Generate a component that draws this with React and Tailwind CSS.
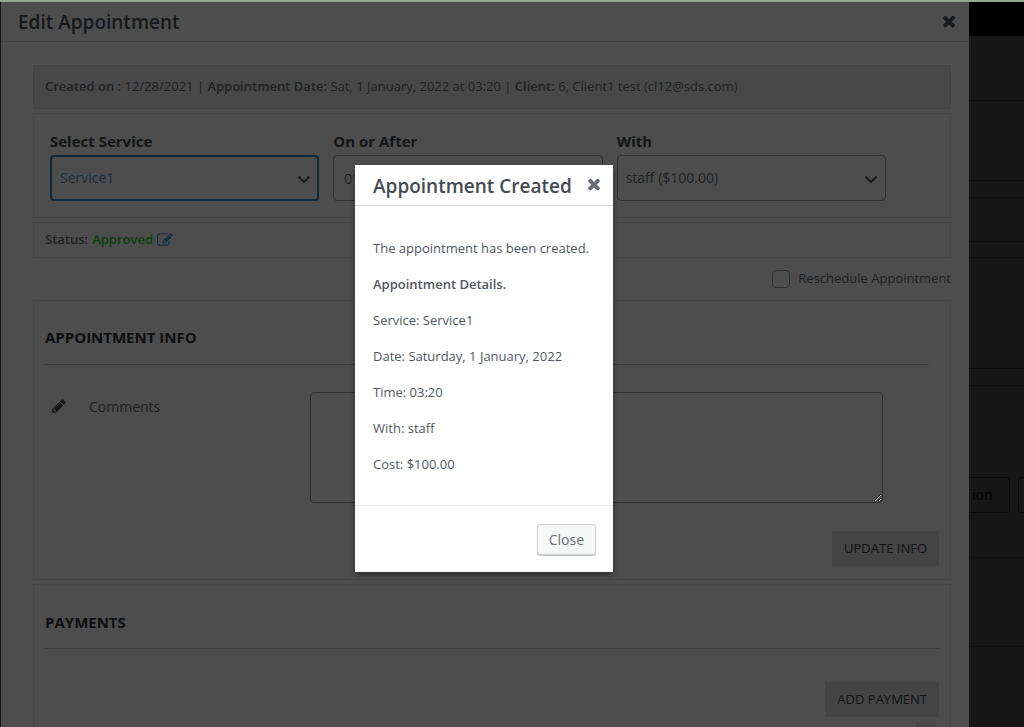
import React, { useState } from 'react';

function TimesIcon({ className }) {
    return (
        <svg viewBox="0 0 1792 1792" fill="currentColor" className={className} aria-hidden="true">
            <path d="M1490 1322q0 40-28 68l-136 136q-28 28-68 28t-68-28l-294-294-294 294q-28 28-68 28t-68-28l-136-136q-28-28-28-68t28-68l294-294-294-294q-28-28-28-68t28-68l136-136q28-28 68-28t68 28l294 294 294-294q28-28 68-28t68 28l136 136q28 28 28 68t-28 68l-294 294 294 294q28 28 28 68z" />
        </svg>
    );
}

function PencilIcon({ className }) {
    return (
        <svg viewBox="0 0 1792 1792" fill="currentColor" className={className} aria-hidden="true">
            <path d="M491 1536l91-91-235-235-91 91v107h128v128h107zm523-928q0-22-22-22-10 0-17 7l-542 542q-7 7-7 17 0 22 22 22 10 0 17-7l542-542q7-7 7-17zm-54-192l416 416-832 832h-416v-416zm683 96q0 53-37 90l-166 166-416-416 166-165q36-38 90-38 53 0 91 38l235 234q37 39 37 91z" />
        </svg>
    );
}

function EditIcon({ className }) {
    return (
        <svg viewBox="0 0 1792 1792" fill="currentColor" className={className} aria-hidden="true">
            <path d="M888 1184l116-116-152-152-116 116v56h96v96h56zm440-720q-16-16-33 1l-350 350q-17 17-1 33t33-1l350-350q17-17 1-33zm80 594v190q0 119-84.5 203.5t-203.5 84.5h-832q-119 0-203.5-84.5t-84.5-203.5v-832q0-119 84.5-203.5t203.5-84.5h832q63 0 117 25 15 7 18 23 3 17-9 29l-49 49q-14 14-32 8-23-6-45-6h-832q-66 0-113 47t-47 113v832q0 66 47 113t113 47h832q66 0 113-47t47-113v-126q0-13 9-22l64-64q15-15 35-7t20 29zm-96-738l288 288-672 672h-288v-288zm444 132l-92 92-288-288 92-92q28-28 68-28t68 28l152 152q28 28 28 68t-28 68z" />
        </svg>
    );
}

function SelectField({ id, label, value, active }) {
    return (
        <div>
            <label htmlFor={id} className="block text-[15px] leading-5 mb-1 font-bold text-[#141516]">{label}</label>
            <div className="relative">
                <select
                    id={id}
                    defaultValue={value}
                    className={
                        active
                            ? 'w-full h-[46px] px-2 text-sm appearance-none rounded border-2 border-[#0b2a40] text-[#16303f] outline-none'
                            : 'w-full h-[46px] px-2 text-sm appearance-none rounded border border-[#2f3031] text-[#202224] outline-none'
                    }
                >
                    <option value={value}>{value}</option>
                </select>
                <svg viewBox="0 0 14 10" className="absolute right-2 top-5 w-3.5 h-2.5 text-[#191b1c] pointer-events-none" fill="none" stroke="currentColor" strokeWidth="2">
                    <path d="M1.5 1.5 L7 7 L12.5 1.5" />
                </svg>
            </div>
        </div>
    );
}

function Dialog({ onClose }) {
    const details = [
        'Service: Service1',
        'Date: Saturday, 1 January, 2022',
        'Time: 03:20',
        'With: staff',
        'Cost: $100.00',
    ];

    return (
        <div className="absolute inset-0 flex items-center justify-center pt-2 pr-0.5">
            <div role="dialog" aria-labelledby="dialog-title" className="w-[258px] bg-white text-[#50575e] shadow-[0_3px_6px_rgba(0,0,0,0.4)]">
                <div className="flex items-center justify-between h-[41px] pl-[18px] pr-2.5 border-b border-[#dddddd]">
                    <h2 id="dialog-title" className="pt-0.5 text-[19px] font-semibold text-[#444b52] whitespace-nowrap">Appointment Created</h2>
                    <button type="button" aria-label="Close dialog" onClick={onClose} className="mb-0.5 text-[#666c72]">
                        <TimesIcon className="w-[18px] h-[18px]" />
                    </button>
                </div>
                <div className="px-[18px] pt-8 pb-[31px] space-y-4 leading-5 whitespace-nowrap">
                    <p>The appointment has been created.</p>
                    <p className="font-semibold">Appointment Details.</p>
                    {details.map((line) => (
                        <p key={line}>{line}</p>
                    ))}
                </div>
                <div className="flex justify-end px-[17px] pt-[18px] pb-[17px] border-t border-[#e5e5e5]">
                    <button type="button" onClick={onClose} className="h-[31px] px-[11px] rounded-[3px] border border-[#cccccc] bg-[#f6f7f7] text-sm text-[#6b7075] shadow-[0_1px_0_#c4c8cb]">
                        Close
                    </button>
                </div>
            </div>
        </div>
    );
}

function App() {
    const [open, setOpen] = useState(true);
    const [comments, setComments] = useState('');
    const [date, setDate] = useState('01/01/2022');

    return (
        <div className="h-screen overflow-hidden flex flex-col bg-[#171717] border-t-2 border-[#91ab93] font-['Open_Sans','Noto_Sans',sans-serif] text-[13px]">
            <div className="flex flex-1 min-h-0">
                <main className="relative flex-1 ml-px bg-[#4d4d4d] text-[#202224]">
                    <header className="flex items-center justify-between h-10 pl-[17px] pr-[11px] border-b border-[#434343]">
                        <h1 className="pt-0.5 text-[19px] font-semibold text-[#16181a]">Edit Appointment</h1>
                        <button type="button" aria-label="Close panel" className="mb-0.5 text-[#191b1c]">
                            <TimesIcon className="w-[18px] h-[18px]" />
                        </button>
                    </header>

                    <div className="pl-8 pr-[18px] pt-[23px]">
                        <div className="flex items-center h-11 px-[11px] mb-1 border border-[#444444] bg-[#484848] whitespace-nowrap">
                            <p>
                                <b className="font-semibold">Created on :</b> 12/28/2021 | <b className="font-semibold">Appointment Date:</b> Sat, 1 January, 2022 at 03:20 | <b className="font-semibold">Client:</b> 6, Client1 test (cl12@sds.com)
                            </p>
                        </div>

                        <div className="grid grid-cols-3 gap-3.5 h-[105px] pl-4 pr-16 pt-[17px] mb-1 border border-[#474747]">
                            <SelectField id="service" label="Select Service" value="Service1" active />
                            <div>
                                <label htmlFor="after" className="block text-[15px] leading-5 mb-1 font-bold text-[#141516]">On or After</label>
                                <input
                                    id="after"
                                    type="text"
                                    value={date}
                                    onChange={(e) => setDate(e.target.value)}
                                    className="w-full h-[46px] px-2.5 text-sm rounded border border-[#2f3031] outline-none"
                                />
                            </div>
                            <SelectField id="staff" label="With" value="staff ($100.00)" />
                        </div>

                        <div className="flex items-center h-9 px-[11px] border border-[#474747]">
                            <span className="font-semibold">Status:</span>
                            <span className="ml-1 font-semibold text-[#064206]">Approved</span>
                            <a href="#status" aria-label="Edit status" className="ml-1 text-[#122f47]">
                                <EditIcon className="w-4 h-4" />
                            </a>
                        </div>

                        <div className="flex items-center justify-end gap-2 h-[42px]">
                            <input id="reschedule" type="checkbox" className="w-[18px] h-[18px] appearance-none rounded border border-[#2e2f30]" />
                            <label htmlFor="reschedule">Reschedule Appointment</label>
                        </div>

                        <section className="h-[280px] px-[11px] pt-[26px] mb-1 border border-[#474747]">
                            <h3 className="h-[38px] mr-2.5 text-[15px] leading-5 font-bold text-[#0e0f10] border-b border-[#3e3e3e]">APPOINTMENT INFO</h3>
                            <div className="flex pt-[27px] pr-14">
                                <PencilIcon className="w-4 h-4 ml-1.5 mt-1.5 text-[#141516]" />
                                <label htmlFor="comments" className="w-[221px] ml-[22px] mt-[5px] text-sm leading-5">Comments</label>
                                <textarea
                                    id="comments"
                                    value={comments}
                                    onChange={(e) => setComments(e.target.value)}
                                    className="flex-1 h-[111px] rounded border border-[#2f3031] outline-none"
                                />
                            </div>
                            <div className="flex justify-end pt-7">
                                <button type="button" className="h-[35px] px-3 bg-[#444444] text-[#121314]">UPDATE INFO</button>
                            </div>
                        </section>

                        <section className="px-[11px] pt-[27px] border-x border-t border-[#474747]">
                            <h3 className="h-[37px] text-[15px] leading-5 font-bold text-[#0e0f10] border-b border-[#3e3e3e]">PAYMENTS</h3>
                            <div className="flex flex-col items-end gap-1.5 pt-[33px]">
                                <button type="button" className="h-[35px] px-3 bg-[#444444] text-[#121314]">ADD PAYMENT</button>
                                <div className="w-5 h-5 mr-[3px] bg-[#464646]" />
                            </div>
                        </section>
                    </div>

                    {open && <Dialog onClose={() => setOpen(false)} />}
                </main>

                {/* dimmed page behind the panel */}
                <aside className="w-[55px] overflow-hidden text-[#060606]">
                    <div className="h-[34px] bg-black" />
                    <div className="h-[65px] border-b border-[#111111]" />
                    <div className="h-20 border-b border-[#0e0e0e]" />
                    <div className="h-[17px] border-b border-[#111111]" />
                    <div className="h-11 border-b border-[#0e0e0e]" />
                    <div className="h-4 border-b border-[#111111]" />
                    <div className="h-[111px] border-b border-[#0e0e0e]" />
                    <div className="h-[17px] border-b border-[#111111]" />
                    <div className="flex items-start gap-2 h-[172px] pt-[91px] border-b border-[#121212]">
                        <button type="button" className="w-[41px] h-9 shrink-0 pr-4 flex items-center justify-end rounded-r-[3px] border border-l-0 border-[#070b10] text-sm font-semibold">ion</button>
                        <div className="w-10 h-9 shrink-0 rounded-[3px] border border-[#070b10]" />
                    </div>
                    <div className="h-[89px] border-b border-[#121212]" />
                </aside>
            </div>
        </div>
    );
}

export default App;
